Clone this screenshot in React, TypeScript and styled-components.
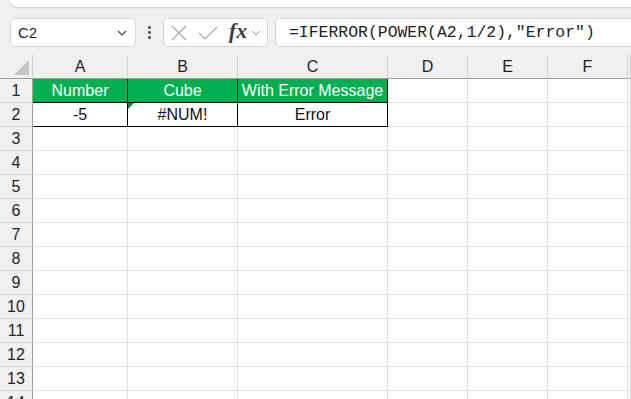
import React from 'react';
import styled, { createGlobalStyle } from 'styled-components';

const GlobalStyle = createGlobalStyle`
  html, body {
    margin: 0;
    padding: 0;
    background: #f0f0f0;
  }
  * {
    box-sizing: border-box;
  }
`;

const Window = styled.div`
  display: flex;
  flex-direction: column;
  width: 631px;
  height: 399px;
  overflow: hidden;
  background: #f0f0f0;
  font-family: 'Liberation Sans', Arial, sans-serif;
  & > * {
    flex-shrink: 0;
  }
`;

// white ribbon edge peeking in at the top
const RibbonEdge = styled.div`
  height: 7px;
  margin-left: 10px;
  background: #ffffff;
  border-radius: 0 0 0 8px;
  box-shadow: 0 1px 2px rgba(0, 0, 0, 0.18);
`;

const Toolbar = styled.div`
  display: flex;
  align-items: center;
  height: 48px;
  padding: 3px 0 0 10px;
`;

const Field = styled.div`
  display: flex;
  align-items: center;
  height: 29px;
  background: #ffffff;
  border: 1px solid #d6d6d6;
  border-radius: 5px;
`;

const NameBox = styled(Field)`
  width: 126px;
  padding: 0 7px 0 7px;
  justify-content: space-between;
  font-size: 15px;
  color: #1f1f1f;
`;

const Grip = styled.div`
  display: flex;
  flex-direction: column;
  gap: 2px;
  margin: 0 12px 0 12px;
  span {
    width: 3px;
    height: 3px;
    border-radius: 1px;
    background: #5c5c5c;
  }
`;

const FuncBox = styled(Field)`
  width: 105px;
  padding: 0 0 0 6px;
  margin-right: 7px;
`;

const Fx = styled.span`
  font-family: 'Liberation Serif', 'DejaVu Serif', serif;
  font-style: italic;
  font-weight: bold;
  font-size: 21px;
  color: #3a3a3a;
  margin: -3px 3px 0 10px;
  letter-spacing: 0.5px;
`;

const FormulaBox = styled(Field)`
  flex: 1;
  margin-right: -10px;
  padding-left: 13px;
  font-family: 'Liberation Mono', 'DejaVu Sans Mono', monospace;
  font-size: 16.45px;
  color: #1f1f1f;
  white-space: nowrap;
`;

const Sheet = styled.div`
  display: grid;
  grid-template-columns: 33px 95px 110px 150px 80px 80px 80px 1fr;
  grid-auto-rows: 24px;
  background: #ffffff;
`;

const Corner = styled.div`
  position: relative;
  background: #f0f0f0;
  border-right: 1px solid #d0d0d0;
  border-bottom: 1px solid #9e9e9e;
  &::after {
    content: '';
    position: absolute;
    right: 3px;
    bottom: 3px;
    width: 0;
    height: 0;
    border-left: 15px solid transparent;
    border-bottom: 15px solid #c6c6c6;
  }
`;

const ColHead = styled.div`
  display: flex;
  align-items: center;
  justify-content: center;
  background: #f0f0f0;
  border-right: 1px solid #d4d4d4;
  border-bottom: 1px solid #9e9e9e;
  font-size: 16px;
  color: #1f1f1f;
  padding-top: 1px;
`;

const RowHead = styled.div`
  display: flex;
  align-items: center;
  justify-content: center;
  background: #f0f0f0;
  border-right: 1px solid #9e9e9e;
  border-bottom: 1px solid #d4d4d4;
  font-size: 16px;
  color: #1f1f1f;
  padding-top: 1px;
`;

const Cell = styled.div<{ $fill?: string; $boxed?: boolean; $light?: boolean }>`
  position: relative;
  display: flex;
  align-items: center;
  justify-content: center;
  background: ${(p) => p.$fill || '#ffffff'};
  border-right: 1px solid ${(p) => (p.$boxed ? '#000000' : '#e1e1e1')};
  border-bottom: 1px solid ${(p) => (p.$boxed ? '#000000' : '#e1e1e1')};
  color: ${(p) => (p.$light ? '#ffffff' : '#111111')};
  font-size: 16px;
  padding-top: 1px;
  white-space: nowrap;
`;

// green "error" marker in the top left corner of a cell
const ErrorFlag = styled.span`
  position: absolute;
  left: 0;
  top: 0;
  width: 0;
  height: 0;
  border-top: 6px solid #1e7b34;
  border-right: 6px solid transparent;
`;

const Chevron = ({ size = 12 }: { size?: number }) => (
  <svg width={size} height={size} viewBox="0 0 12 12">
    <polyline points="2,4 6,8 10,4" fill="none" stroke="#444" strokeWidth="1.2" />
  </svg>
);

const CancelIcon = () => (
  <svg width="18" height="18" viewBox="0 0 18 18">
    <path d="M2 2 L16 16 M16 2 L2 16" stroke="#a8a8a8" strokeWidth="1.2" fill="none" />
  </svg>
);

const EnterIcon = () => (
  <svg width="22" height="18" viewBox="0 0 22 18" style={{ marginLeft: 9 }}>
    <polyline points="2,9 8,15 20,3" stroke="#a8a8a8" strokeWidth="1.2" fill="none" />
  </svg>
);

const columns = ['A', 'B', 'C', 'D', 'E', 'F', ''];

const data: Record<number, { text: string; fill?: string; light?: boolean; flag?: boolean }[]> = {
  1: [
    { text: 'Number', fill: '#00b050', light: true },
    { text: 'Cube', fill: '#00b050', light: true },
    { text: 'With Error Message', fill: '#00b050', light: true },
  ],
  2: [{ text: '-5' }, { text: '#NUM!', flag: true }, { text: 'Error' }],
};

export default function App() {
  const rows = Array.from({ length: 14 }, (_, i) => i + 1);

  return (
    <Window>
      <GlobalStyle />
      <RibbonEdge />
      <Toolbar>
        <NameBox>
          <span>C2</span>
          <Chevron />
        </NameBox>
        <Grip>
          <span />
          <span />
          <span />
        </Grip>
        <FuncBox>
          <CancelIcon />
          <EnterIcon />
          <Fx>fx</Fx>
          <svg width="10" height="10" viewBox="0 0 10 10">
            <polyline points="1,3 5,7 9,3" fill="none" stroke="#8a8a8a" strokeWidth="1" />
          </svg>
        </FuncBox>
        <FormulaBox>=IFERROR(POWER(A2,1/2),"Error")</FormulaBox>
      </Toolbar>
      <Sheet>
        <Corner />
        {columns.map((c, i) => (
          <ColHead key={i}>{c}</ColHead>
        ))}
        {rows.map((r) => (
          <React.Fragment key={r}>
            <RowHead>{r}</RowHead>
            {columns.map((_, ci) => {
              const cell = data[r]?.[ci];
              return (
                <Cell
                  key={ci}
                  $fill={cell?.fill}
                  $light={cell?.light}
                  $boxed={!!cell}
                >
                  {cell?.flag && <ErrorFlag />}
                  {cell?.text}
                </Cell>
              );
            })}
          </React.Fragment>
        ))}
      </Sheet>
    </Window>
  );
}
